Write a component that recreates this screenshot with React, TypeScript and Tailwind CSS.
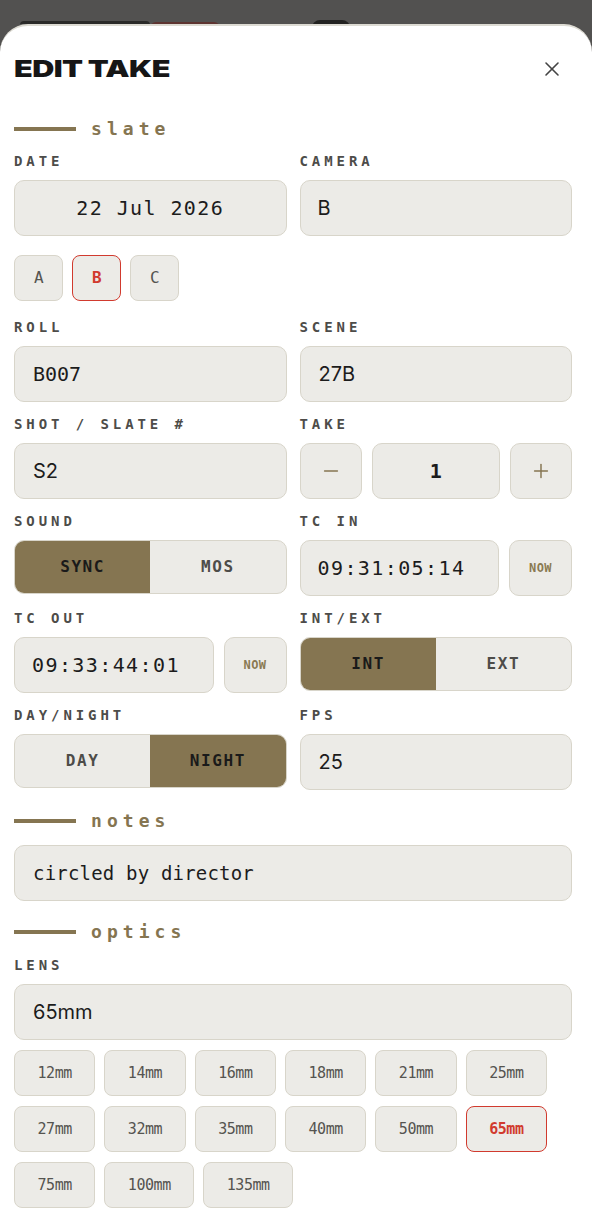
import React, { useState } from "react";
import { X, Minus, Plus } from "lucide-react";

const MONO = "font-['DejaVu_Sans_Mono','Liberation_Mono',monospace]";
const SANS = "font-['Inter','Noto_Sans',sans-serif]";

const LENSES = ["12mm", "14mm", "16mm", "18mm", "21mm", "25mm", "27mm", "32mm", "35mm", "40mm", "50mm", "65mm", "75mm", "100mm", "135mm"];

function SectionHead({ title }: { title: string }) {
	return (
		<div className="flex items-center gap-[15px] h-6">
			<div className="w-[62px] h-[4px] bg-[#857551]" />
			<span className={`${MONO} text-[18px] font-bold tracking-[0.28em] text-[#857551] leading-6`}>{title}</span>
		</div>
	);
}

function Label({ children }: { children: React.ReactNode }) {
	return (
		<div className={`${MONO} text-[14px] font-bold tracking-[0.28em] text-[#4d4c49] leading-5 h-5 mb-[9px] whitespace-pre`}>
			{children}
		</div>
	);
}

function Box({ children, className = "" }: { children: React.ReactNode; className?: string }) {
	return (
		<div className={`h-[56px] flex items-center rounded-[10px] border border-[#d8d5ca] bg-[#ecebe7] text-[#1c1c1c] ${className}`}>
			{children}
		</div>
	);
}

function NowButton() {
	return (
		<button className={`w-[63px] h-[56px] shrink-0 rounded-[10px] border border-[#d8d5ca] bg-[#ecebe7] ${MONO} text-[12px] font-bold tracking-[0.04em] text-[#8a7a52]`}>
			NOW
		</button>
	);
}

function Toggle({ options, value }: { options: string[]; value: string }) {
	return (
		<div className="h-[54px] flex rounded-[10px] border border-[#d8d5ca] bg-[#ecebe7] overflow-hidden">
			{options.map((o) => (
				<div
					key={o}
					className={`flex-1 flex items-center justify-center ${MONO} text-[16px] font-bold tracking-[0.1em] ${
						o === value ? "bg-[#857551] text-[#1a1a1a]" : "text-[#4d4c49]"
					}`}
				>
					{o}
				</div>
			))}
		</div>
	);
}

function Chip({ label, active, className = "" }: { label: string; active?: boolean; className?: string }) {
	return (
		<button
			className={`h-[46px] rounded-[8px] border bg-[#ecebe7] ${MONO} text-[15px] tracking-[-0.03em] ${
				active ? "border-[#d13a2e] text-[#d13a2e] font-bold" : "border-[#d8d5ca] text-[#555450]"
			} ${className}`}
		>
			{label}
		</button>
	);
}

export default function App() {
	const [cam, setCam] = useState("B");
	const [lens, setLens] = useState("65mm");

	return (
		<div className="w-[592px] min-h-screen flex flex-col bg-[#525150]">
			{/* page behind the sheet, mostly covered */}
			<div className="h-[24px] shrink-0 overflow-hidden flex items-start pl-[20px]">
				<div className="mt-[21px] w-[130px] h-[8px] rounded-t-[4px] bg-[#2a2a29]" />
				<div className="mt-[22px] w-[70px] h-[8px] rounded-t-[6px] bg-[#5e3431]" />
				<div className="ml-[92px] mt-[20px] w-[38px] h-[10px] rounded-t-[8px] bg-[#222221]" />
			</div>

			<div className="flex-1 bg-white rounded-t-[28px] border-t-2 border-[#dddbd3] pl-[14px] pr-[20px] pt-[23px] pb-[18px]">
				{/* HEADER */}
				<div className="flex items-center justify-between h-10">
					<h1 className={`${SANS} text-[23px] font-black tracking-[-0.02em] text-[#161616] leading-none origin-left scale-x-[1.33]`}>
						EDIT TAKE
					</h1>
					<button className="w-10 h-10 flex items-center justify-center text-[#444]">
						<X size={24} strokeWidth={1.6} />
					</button>
				</div>

				{/* SLATE */}
				<div className="mt-[28px]">
					<SectionHead title="slate" />
				</div>

				<div className="grid grid-cols-2 gap-x-[13px] gap-y-[12px] mt-[10px]">
					<div>
						<Label>DATE</Label>
						<Box className={`justify-center ${MONO} text-[20px] tracking-[0.07em]`}>22 Jul 2026</Box>
						<div className="flex gap-[9px] mt-[19px] mb-[4px]">
							{["A", "B", "C"].map((c) => (
								<Chip key={c} label={c} active={cam === c} className="w-[49px] text-[16px]" />
							))}
						</div>
					</div>
					<div>
						<Label>CAMERA</Label>
						<Box className={`pl-[17px] ${SANS} text-[20px]`}>
							<span onClick={() => setCam("B")}>B</span>
						</Box>
					</div>

					<div>
						<Label>ROLL</Label>
						<Box className={`pl-[18px] ${MONO} text-[20px]`}>B007</Box>
					</div>
					<div>
						<Label>SCENE</Label>
						<Box className={`pl-[18px] ${SANS} text-[20px]`}>27B</Box>
					</div>

					<div>
						<Label>SHOT / SLATE #</Label>
						<Box className={`pl-[18px] ${SANS} text-[20px]`}>S2</Box>
					</div>
					<div>
						<Label>TAKE</Label>
						<div className="flex gap-[10px]">
							<Box className="w-[62px] shrink-0 justify-center text-[#857551]">
								<Minus size={22} strokeWidth={1.6} />
							</Box>
							<Box className={`flex-1 justify-center ${MONO} text-[20px] font-bold`}>1</Box>
							<Box className="w-[62px] shrink-0 justify-center text-[#857551]">
								<Plus size={22} strokeWidth={1.6} />
							</Box>
						</div>
					</div>

					<div>
						<Label>SOUND</Label>
						<Toggle options={["SYNC", "MOS"]} value="SYNC" />
					</div>
					<div>
						<Label>TC IN</Label>
						<div className="flex gap-[10px]">
							<Box className={`flex-1 pl-[17px] ${MONO} text-[20px] tracking-[0.07em]`}>09:31:05:14</Box>
							<NowButton />
						</div>
					</div>

					<div>
						<Label>TC OUT</Label>
						<div className="flex gap-[10px]">
							<Box className={`flex-1 pl-[17px] ${MONO} text-[20px] tracking-[0.07em]`}>09:33:44:01</Box>
							<NowButton />
						</div>
					</div>
					<div>
						<Label>INT/EXT</Label>
						<Toggle options={["INT", "EXT"]} value="INT" />
					</div>

					<div>
						<Label>DAY/NIGHT</Label>
						<Toggle options={["DAY", "NIGHT"]} value="NIGHT" />
					</div>
					<div>
						<Label>FPS</Label>
						<Box className={`pl-[18px] ${SANS} text-[20px]`}>25</Box>
					</div>
				</div>

				{/* NOTES */}
				<div className="mt-[19px]">
					<SectionHead title="notes" />
				</div>
				<Box className={`mt-[12px] pl-[18px] ${MONO} text-[19px] tracking-[0.01em]`}>circled by director</Box>

				{/* OPTICS */}
				<div className="mt-[19px]">
					<SectionHead title="optics" />
				</div>
				<div className="mt-[11px]">
					<Label>LENS</Label>
					<Box className={`pl-[18px] ${SANS} text-[20px]`}>{lens}</Box>
				</div>
				<div className="flex flex-wrap gap-x-[9px] gap-y-[10px] mt-[10px]">
					{LENSES.map((l) => (
						<div key={l} onClick={() => setLens(l)}>
							<Chip label={l} active={lens === l} className="px-[22.5px]" />
						</div>
					))}
				</div>
			</div>
		</div>
	);
}
